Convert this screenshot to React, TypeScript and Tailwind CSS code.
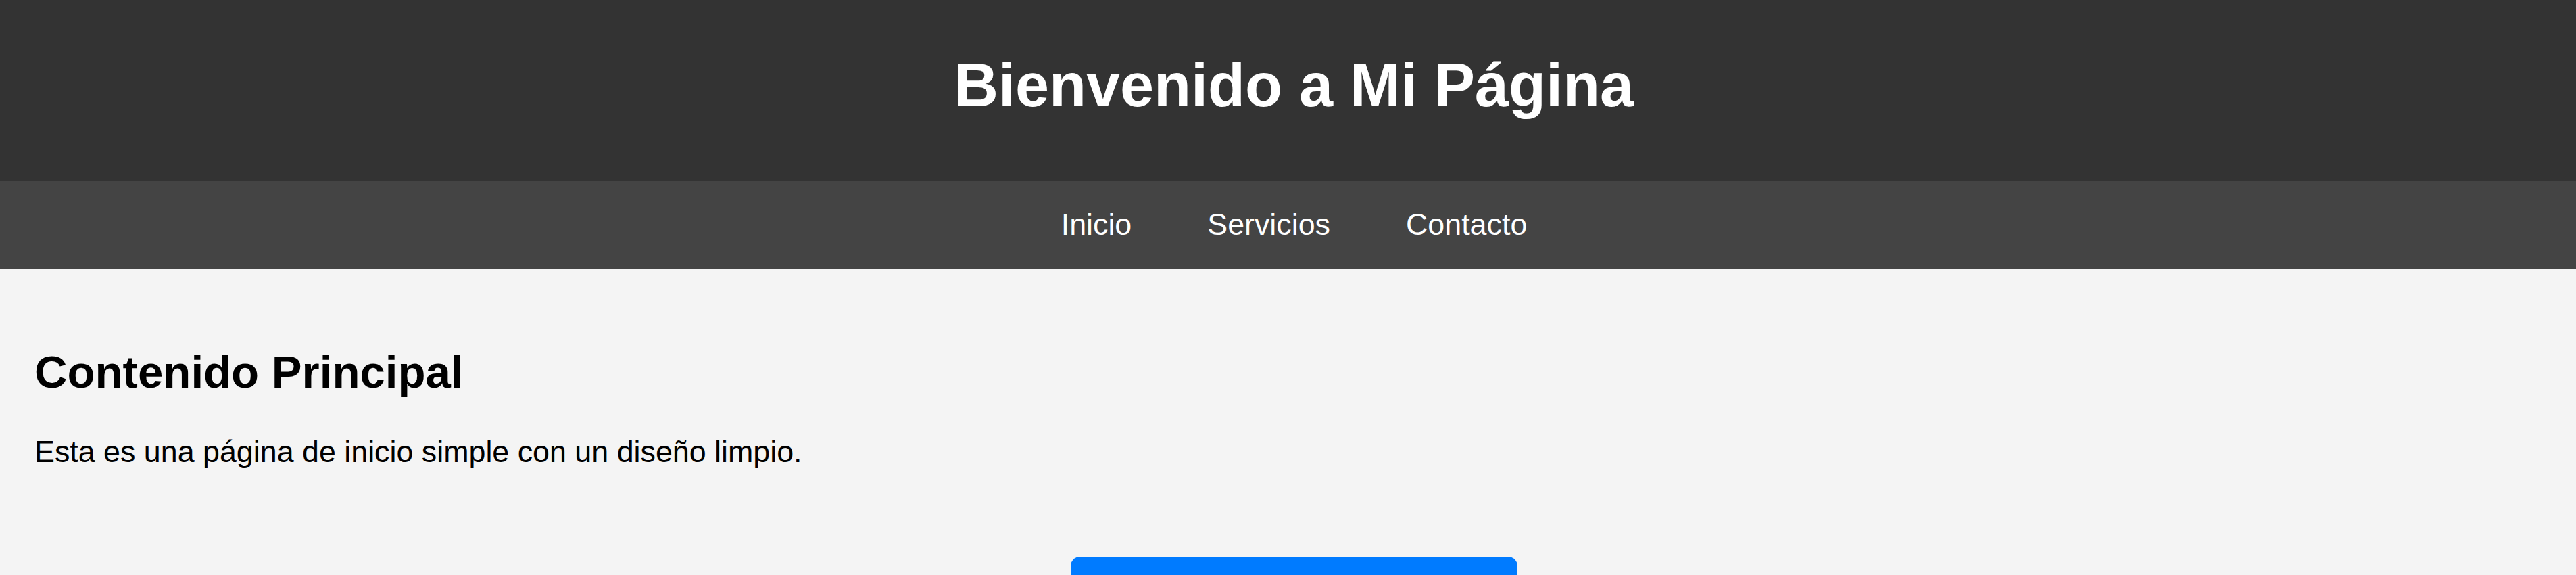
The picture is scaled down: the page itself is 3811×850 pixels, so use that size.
export default function App() {
  const links = ["Inicio", "Servicios", "Contacto"];
  return (
    <div className="min-h-screen bg-[#f4f4f4] font-['Liberation_Sans',Arial,sans-serif] text-black">
      {/* header */}
      <header className="h-[267px] bg-[#333333] pt-[75px] pl-[18px] text-center text-white">
        <h1 className="text-[90px] font-bold leading-[1.15]">Bienvenido a Mi Página</h1>
      </header>
      {/* nav */}
      <nav className="flex h-[131px] justify-center bg-[#444444] pt-[39px] pl-[18px]">
        {links.map((l) => (
          <a key={l} href="#" className="mx-[56px] text-[44.8px] leading-[1.15] text-white">
            {l}
          </a>
        ))}
      </nav>
      {/* main */}
      <main className="flex flex-col pt-[113px] pl-[51px] pr-[33px] pb-[40px]">
        <h2 className="text-[67.2px] font-bold leading-[1.15]">Contenido Principal</h2>
        <p className="mt-[54px] text-[44.8px] leading-[1.15]">
          Esta es una página de inicio simple con un diseño limpio.
        </p>
        <button className="mx-auto mt-[129px] h-[130px] w-[661px] rounded-[14px] bg-[#007bff] pt-[36px] text-[44.8px] leading-[1.15] text-white">
          Ver más
        </button>
      </main>
    </div>
  );
}
